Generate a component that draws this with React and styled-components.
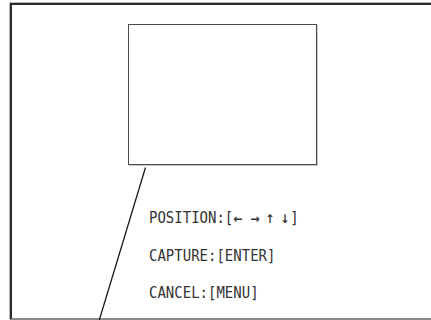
import React from "react";
import styled, { createGlobalStyle } from "styled-components";

const Global = createGlobalStyle`
  html, body { margin: 0; padding: 0; background: #fff; overflow: hidden; }
  #root { width: 431px; height: 320px; overflow: hidden; }
`;

const Frame = styled.div`
  position: relative;
  box-sizing: border-box;
  margin: 3px 0 0 10px;
  width: 440px;
  height: 317px;
  border-left: 2px solid #2b2b2b;
  border-top: 2px solid #2b2b2b;
  border-bottom: 2px solid #8a8a8a;
  box-shadow: -1px -1px 0 #b8b8b8;
  padding: 19px 0 0 116px;
`;

const Preview = styled.div`
  box-sizing: border-box;
  width: 189px;
  height: 141px;
  border: 1px solid #4a4a4a;
  box-shadow: 1px 1px 0 #c8c8c8;
`;

const Help = styled.div`
  display: flex;
  flex-direction: column;
  margin: 44px 0 0 21px;
  font-family: "DejaVu Sans Mono", "Liberation Mono", monospace;
  font-size: 14px;
  color: #333;
`;

const Line = styled.div`
  height: 37.5px;
  line-height: 16px;
  white-space: pre;
  transform: scaleY(1.1);
  transform-origin: left top;
`;

const Arrow = styled.span`
  display: inline-block;
  width: ${(p) => p.$w}px;
  font-family: "DejaVu Sans", sans-serif;
  font-size: 11px;
  font-weight: bold;
  text-align: left;
`;

const Pointer = styled.svg`
  position: absolute;
  left: -12px;
  top: -5px;
  width: 431px;
  height: 320px;
  pointer-events: none;
`;

export default function App() {
  return (
    <>
      <Global />
      <Frame>
        <Preview />
        <Help>
          <Line>
            POSITION:[
            <Arrow $w={17}>←</Arrow>
            <Arrow $w={15}>→</Arrow>
            <Arrow $w={15}>↑</Arrow>
            <Arrow $w={10}>↓</Arrow>]
          </Line>
          <Line>CAPTURE:[ENTER]</Line>
          <Line>CANCEL:[MENU]</Line>
        </Help>
        <Pointer viewBox="0 0 431 320">
          <line x1="145.5" y1="167.5" x2="99" y2="321" stroke="#1a1a1a" strokeWidth="1.3" />
        </Pointer>
      </Frame>
    </>
  );
}
